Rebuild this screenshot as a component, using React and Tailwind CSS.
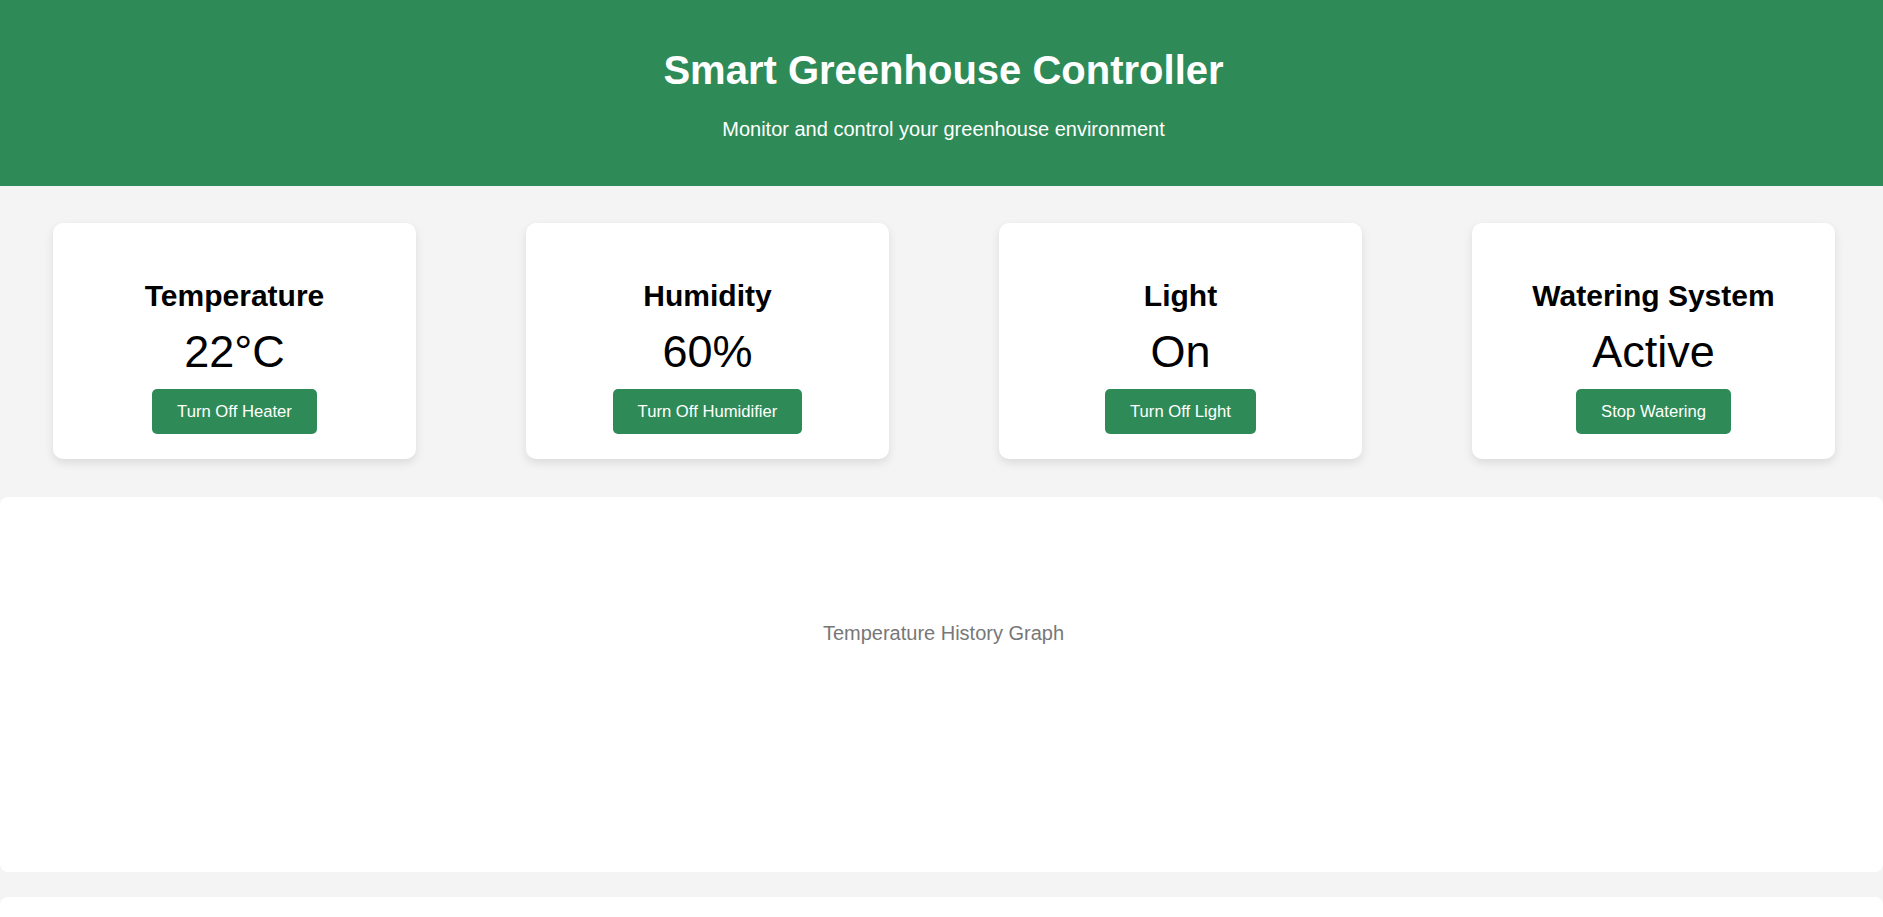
import React from "react";

const cards = [
  { title: "Temperature", value: "22°C", action: "Turn Off Heater" },
  { title: "Humidity", value: "60%", action: "Turn Off Humidifier" },
  { title: "Light", value: "On", action: "Turn Off Light" },
  { title: "Watering System", value: "Active", action: "Stop Watering" },
];

export default function App() {
  return (
    <div
      className="min-h-screen bg-[#f4f4f4] text-black overflow-hidden"
      style={{ fontFamily: '"Liberation Sans", Arial, sans-serif' }}
    >
      <header className="bg-[#2e8b57] text-white text-center pt-[47px] pb-[45px] pl-[4px]">
        <h1 className="text-[40px] leading-[46px] font-bold">Smart Greenhouse Controller</h1>
        <p className="mt-[25px] text-[20px] leading-[23px]">Monitor and control your greenhouse environment</p>
      </header>

      <section className="flex gap-[110px] pl-[53px] mt-[37px]">
        {cards.map((c) => (
          <div
            key={c.title}
            className="w-[363px] shrink-0 bg-white rounded-[10px] shadow-[0_4px_10px_rgba(0,0,0,0.1)] flex flex-col items-center pt-[56px] pb-[25px]"
          >
            <h2 className="text-[30px] leading-[34px] font-bold">{c.title}</h2>
            <div className="mt-[13px] text-[45px] leading-[52px]">{c.value}</div>
            <button className="mt-[11px] h-[45px] px-[25px] bg-[#2e8b57] text-white text-[16.67px] leading-[19px] rounded-[5px]">
              {c.action}
            </button>
          </div>
        ))}
      </section>

      <section className="mt-[38px] h-[375px] bg-white rounded-[8px] flex justify-center pt-[125px] pl-[4px]">
        <p className="text-[20px] leading-[23px] text-[#777777]">Temperature History Graph</p>
      </section>

      <section className="mt-[25px] h-[300px] bg-white rounded-[8px]" />
    </div>
  );
}
